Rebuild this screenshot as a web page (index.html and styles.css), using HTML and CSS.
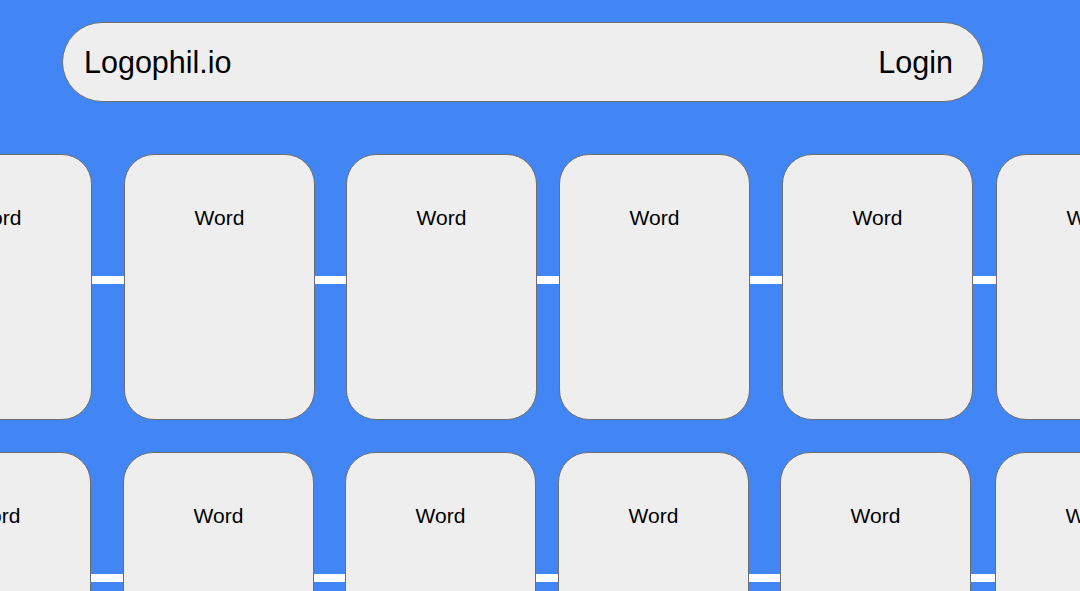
FILE: index.html
```html
<!DOCTYPE html>
<html lang="en">
<head>
<meta charset="utf-8">
<title>Logophil.io</title>
<link rel="stylesheet" href="styles.css">
</head>
<body>
<header class="topbar">
  <nav class="nav">
    <span class="brand">Logophil.io</span>
    <span class="login">Login</span>
  </nav>
</header>
<main class="board">
  <div class="row row-a">
    <div class="card c1">Word</div>
    <div class="card c2">Word</div>
    <div class="card c3">Word</div>
    <div class="card c4">Word</div>
    <div class="card c5">Word</div>
    <div class="card c6">Word</div>
  </div>
  <div class="row row-b">
    <div class="card c1">Word</div>
    <div class="card c2">Word</div>
    <div class="card c3">Word</div>
    <div class="card c4">Word</div>
    <div class="card c5">Word</div>
    <div class="card c6">Word</div>
  </div>
</main>
</body>
</html>
```
FILE: styles.css
```css
html, body {
  margin: 0;
  padding: 0;
}
body {
  background: #4285f4;
  font-family: "Liberation Sans", Arial, sans-serif;
  color: #000;
  overflow: hidden;
  width: 1080px;
  height: 591px;
}
.topbar {
  padding: 22px 0 0 62px;
}
.nav {
  box-sizing: border-box;
  width: 922px;
  height: 80px;
  background: #eeeeee;
  border: 1px solid #707070;
  border-radius: 40px;
  display: flex;
  align-items: center;
  justify-content: space-between;
  padding: 0 30px 0 21px;
  font-size: 30.5px;
}
.board {
  padding-top: 52px;
}
.row {
  position: relative;
  display: flex;
  margin-left: -99px;
  width: 1400px;
}
.row::before {
  content: "";
  position: absolute;
  left: 0;
  right: 0;
  top: 122px;
  height: 8px;
  background: #ffffff;
  z-index: 0;
}
.row-b {
  margin-top: 32px;
  margin-left: -100px;
}
.card {
  position: relative;
  z-index: 1;
  box-sizing: border-box;
  flex: 0 0 191px;
  width: 191px;
  height: 266px;
  background: #eeeeee;
  border: 1px solid #6e6e6e;
  border-radius: 30px;
  text-align: center;
  font-size: 21px;
  padding-top: 51px;
}
.c1 { margin-right: 32px; }
.c2 { margin-right: 31px; }
.c3 { margin-right: 22px; }
.c4 { margin-right: 32px; }
.c5 { margin-right: 23px; }
.row-b .c4 { margin-right: 31px; }
.row-b .c5 { margin-right: 24px; }
```
